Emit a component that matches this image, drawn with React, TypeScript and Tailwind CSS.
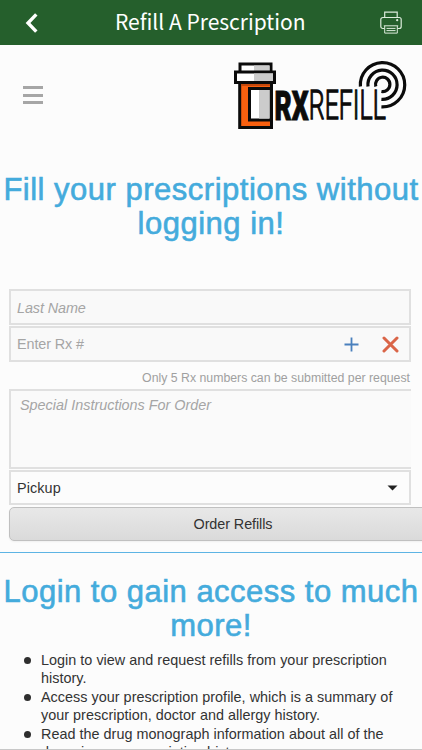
const FEATURES = [
  ['Login to view and request refills from your prescription', 'history.'],
  ['Access your prescription profile, which is a summary of', 'your prescription, doctor and allergy history.'],
  ['Read the drug monograph information about all of the', 'drugs in your prescription history.'],
];

function PrinterIcon() {
  return (
    <svg width="22" height="23" viewBox="0 0 22 23" fill="none" stroke="#dcebdc" strokeWidth="1.2">
      <path d="M4.7 6.2V1.1h12.5v5.1" />
      <path d="M4.5 17.5H2.8a2 2 0 0 1-2-2V8.5a2 2 0 0 1 2-2h16.4a2 2 0 0 1 2 2V15.5a2 2 0 0 1-2 2h-1.7" />
      <path d="M3.8 14.8h14.4M4.7 15v7.1h12.6V15M6.5 17.4h9M6.5 19.6h9" strokeWidth="1" />
      <circle cx="17.2" cy="9.2" r="0.5" fill="#dcebdc" />
    </svg>
  );
}

function Logo() {
  return (
    <svg width="178" height="74" viewBox="230 58 178 74" fill="none">
      <g stroke="#0b0b0b" strokeWidth="3">
        <path d="M240 64h31v9h-31z" fill="#fff" />
        <path d="M254 65.5h15.5v6h-15.5z" fill="#ccc" stroke="none" />
        <path d="M239.7 82h31.8v45.5h-31.8z" fill="#f9600f" />
        <path d="M241.2 83.5h28.8v2.5h-28.8z" fill="#c6480b" stroke="none" />
        <path d="M271 88.5h-21.5v31.5h21.5z" fill="#fff" />
        <path d="M259 90h10.5v28.5h-10.5z" fill="#ccc" stroke="none" />
        <path d="M271.5 82v45.5" />
        <path d="M235.5 72h39v10.5h-39z" fill="#fff" />
        <path d="M254 73.5h19v7.5h-19z" fill="#ccc" stroke="none" />
      </g>
      <g stroke="#0b0b0b" strokeWidth="3.2">
        <path d="M360.4 86.5a22.2 22.2 0 1 1 21 20.4" />
        <path d="M368 86.5a14.6 14.6 0 1 1 13.4 12.800" />
        <path d="M375.800 86.500a7.200 7.200 0 1 1 5.600 5" />
      </g>
      <text
        x="274.5"
        y="119.5"
        textLength="34"
        lengthAdjust="spacingAndGlyphs"
        className="fill-[#0b0b0b] stroke-[#0b0b0b] font-['Roboto'] text-[40px] font-black"
        strokeWidth="1"
      >
        RX
      </text>
      <text
        x="308.8"
        y="119.3"
        textLength="77"
        lengthAdjust="spacingAndGlyphs"
        className="fill-[#0b0b0b] stroke-[#0b0b0b] font-['Roboto'] text-[40px] font-light"
        strokeWidth="1.3"
      >
        REFILL
      </text>
    </svg>
  );
}

export default function App() {
  return (
    <div className="flex h-[750px] w-[422px] flex-col overflow-hidden bg-[#fcfcfc] font-['Liberation_Sans',Arial,sans-serif] text-[#333]">
      <header className="flex h-[45px] shrink-0 items-center bg-[#255f2c] text-white">
        <button className="ml-[25px] w-[14px]" aria-label="Back">
          <svg width="14" height="20" viewBox="0 0 14 20" fill="none" stroke="#fff" strokeWidth="3.4">
            <path d="M11.3 1.3L3 10l8.3 8.7" />
          </svg>
        </button>
        <h1 className="-mt-[4px] ml-[76px] w-[250px] font-['Noto_Sans_CJK_SC',sans-serif] text-[21px] leading-[42px] whitespace-nowrap">
          Refill A Prescription
        </h1>
        <button className="ml-[15px]" aria-label="Print">
          <PrinterIcon />
        </button>
      </header>

      <div className="flex h-[128px] shrink-0 justify-between pt-[13px] pr-[14px] pl-[23px]">
        <button className="mt-[28px] flex h-[18px] w-[20px] flex-col justify-between" aria-label="Menu">
          <span className="h-[3px] w-full bg-[#a6a6a6]" />
          <span className="h-[3px] w-full bg-[#a6a6a6]" />
          <span className="h-[3px] w-full bg-[#a6a6a6]" />
        </button>
        <Logo />
      </div>

      <h2 className="h-[116px] shrink-0 text-center text-[31px] leading-[34px] tracking-[0.5px] whitespace-nowrap text-[#44abdc] [-webkit-text-stroke:0.6px_#44abdc]">
        Fill your prescriptions without
        <br />
        logging in!
      </h2>

      <form className="flex shrink-0 flex-col px-[9px] text-[14.4px]">
        <input
          className="h-9 w-[402px] border-2 border-[#e0e0e0] bg-[#f9f9f9] px-1.5 pt-[2px] tracking-[-0.1px] italic placeholder:text-[#a5a5a5]"
          placeholder="Last Name"
        />
        <div className="mt-px flex h-9 w-[402px] items-center border-2 border-[#e0e0e0] bg-[#f9f9f9] px-1.5">
          <input className="w-[327px] pt-[2px] tracking-[-0.1px] placeholder:text-[#a5a5a5]" placeholder="Enter Rx #" />
          <svg width="15" height="15" viewBox="0 0 15 15" stroke="#4a80bd" strokeWidth="1.8">
            <path d="M7.5 0.5v14M0.5 7.5h14" />
          </svg>
          <svg className="ml-[23px]" width="17" height="17" viewBox="0 0 17 17" stroke="#da6548" strokeWidth="3" strokeLinecap="round">
            <path d="M2 2l13 13M15 2L2 15" />
          </svg>
        </div>
        <p className="h-[27px] w-[401px] pt-[8px] text-right text-[12.3px] leading-[16px] text-[#a0a0a0]">
          Only 5 Rx numbers can be submitted per request
        </p>
        <textarea
          className="h-[80px] w-[402px] resize-none border-2 border-r-0 border-[#e0e0e0] bg-[#fafafa] px-[9px] pt-[5px] leading-[18px] italic placeholder:text-[#a5a5a5]"
          placeholder="Special Instructions For Order"
        />
        <div className="mt-px flex h-[35px] w-[402px] items-center justify-between border-2 border-[#e0e0e0] px-1.5 pr-[11px]">
          <span className="pt-[2px] tracking-[0.1px]">Pickup</span>
          <svg width="11" height="6" viewBox="0 0 11 6">
            <path d="M0.5 0.5h10L5.5 5.5z" fill="#222" />
          </svg>
        </div>
        <button
          type="button"
          className="mt-[2px] h-[34px] w-[448px] rounded-[5px] border border-[#c0c0c0] bg-linear-to-b from-[#e8e8e8] to-[#dadada] pt-px tracking-[-0.08px] shadow-xs"
        >
          Order Refills
        </button>
      </form>

      <section className="mt-[11px] flex min-h-0 grow flex-col overflow-hidden border-t border-b border-t-[#5db4e4] border-b-[#c8c8c8]">
        <h2 className="mt-[22px] shrink-0 text-center text-[31px] leading-[34px] tracking-[0.48px] whitespace-nowrap text-[#44abdc] [-webkit-text-stroke:0.6px_#44abdc]">
          Login to gain access to much
          <br />
          more!
        </h2>
        <ul className="mt-[8px] text-[14.4px] leading-[18.4px] tracking-[0.02px] whitespace-nowrap">
          {FEATURES.map(([first, second]) => (
            <li key={first} className="flex">
              <span className="mt-[6px] mr-[10px] ml-[24px] size-[7px] shrink-0 rounded-full bg-[#2e2e2e]" />
              <p>
                {first}
                <br />
                {second}
              </p>
            </li>
          ))}
        </ul>
      </section>
    </div>
  );
}
